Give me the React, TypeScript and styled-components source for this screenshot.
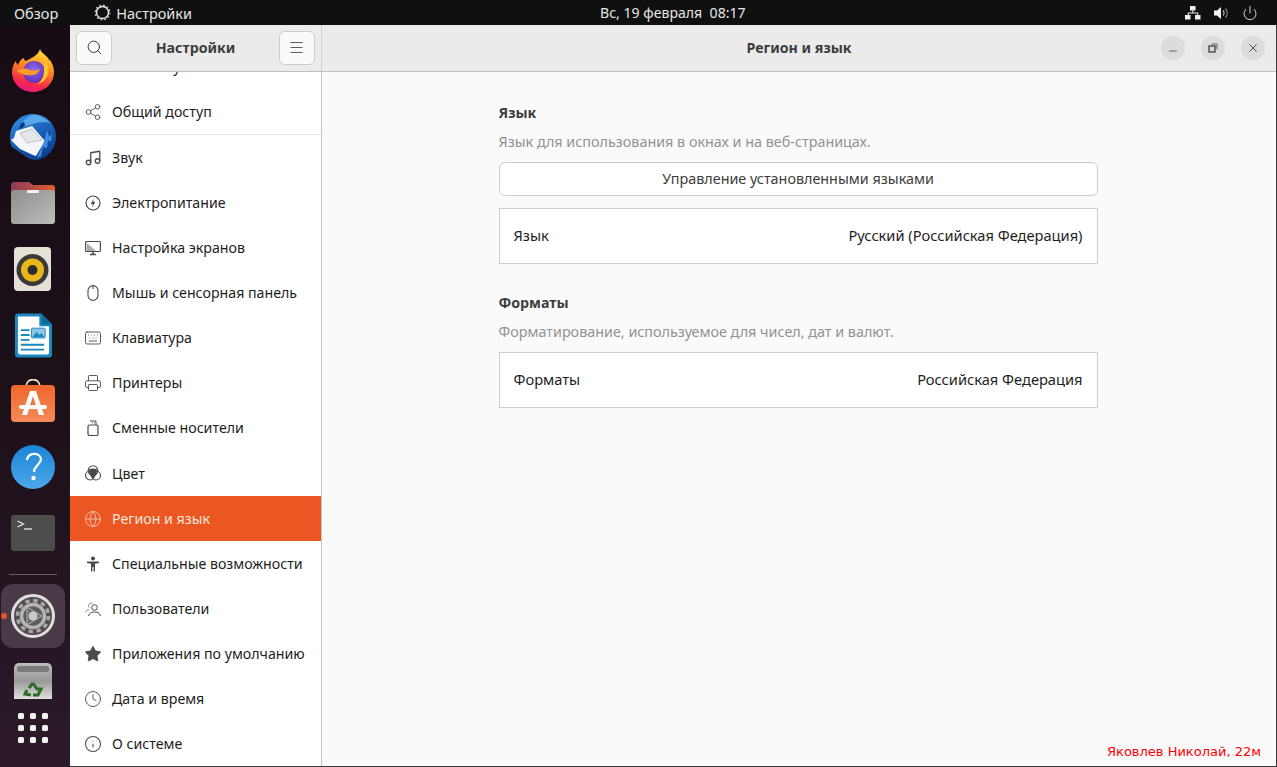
import React from "react";
import styled, { createGlobalStyle } from "styled-components";
import { Share2, Music, Keyboard, Printer, Globe, Clock, Info, Star, Search, Menu, Minus, X, Power } from "lucide-react";

const GlobalStyle = createGlobalStyle`
  html, body { margin: 0; padding: 0; height: 100%; overflow: hidden; }
  body { font-family: "Noto Sans", "Open Sans", sans-serif; font-size: 14px; }
  * { box-sizing: border-box; }
`;

const Screen = styled.div`
  width: 1277px;
  height: 767px;
  display: flex;
  flex-direction: column;
  position: relative;
  overflow: hidden;
`;

const TopBar = styled.div`
  height: 25px;
  flex: none;
  background: #101010;
  color: #e6e6e6;
  display: grid;
  grid-template-columns: 586px auto 1fr;
  align-items: center;
  padding: 0 19px 0 14px;
  font-size: 14.5px;
`;

const TopLeft = styled.div`
  display: flex;
  align-items: center;
`;

const AppName = styled.div`
  display: flex;
  align-items: center;
  gap: 5px;
  margin-left: 36px;
`;

const TopClock = styled.div`
  white-space: pre;
  font-size: 14.1px;
`;

const TopRight = styled.div`
  display: flex;
  align-items: center;
  justify-content: flex-end;
  gap: 13px;
`;

const Body = styled.div`
  flex: 1;
  display: flex;
  min-height: 0;
`;

const Dock = styled.nav`
  width: 70px;
  flex: none;
  background: linear-gradient(180deg, #170c14 0%, #1c1019 50%, #2c1a29 100%);
  display: flex;
  flex-direction: column;
  align-items: center;
  padding: 13px 4px 0 0;
  overflow: hidden;
`;

const DockSlot = styled.div`
  width: 66px;
  height: 66px;
  flex: none;
  display: flex;
  align-items: center;
  justify-content: center;
`;

const ActiveSlot = styled(DockSlot)`
  width: 64px;
  height: 64px;
  background: #4a3a47;
  border-radius: 12px;
  position: relative;
`;

const RunDot = styled.span`
  position: absolute;
  left: 0;
  top: 29px;
  width: 6px;
  height: 6px;
  border-radius: 50%;
  background: #e95420;
`;

const DockSeparator = styled.div`
  width: 48px;
  height: 1px;
  flex: none;
  margin: 8px 0 9px;
  background: #6b5a67;
`;

const AppGrid = styled.div`
  flex: none;
  display: grid;
  grid-template-columns: repeat(3, 6px);
  gap: 6px;
  margin-top: -1px;
  span {
    width: 6px;
    height: 6px;
    border-radius: 1.5px;
    background: #f2f2f2;
  }
`;

const Window = styled.div`
  flex: 1;
  display: flex;
  flex-direction: column;
  min-width: 0;
  border-right: 1px solid #3a3a3a;
  border-bottom: 1px solid #3a3a3a;
`;

const HeaderBar = styled.header`
  height: 47px;
  flex: none;
  display: flex;
  background: #ebebeb;
  border-bottom: 1px solid #bfbfbf;
`;

const SideHeader = styled.div`
  width: 252px;
  flex: none;
  display: flex;
  align-items: center;
  justify-content: space-between;
  padding: 0 6px 1px;
  border-right: 1px solid #d0d0d0;
`;

const HeaderButton = styled.button`
  width: 36px;
  height: 34px;
  padding: 0;
  display: flex;
  align-items: center;
  justify-content: center;
  background: #fafafa;
  border: 1px solid #cdcdcd;
  border-radius: 6px;
  color: #3d3d3d;
`;

const HeaderTitle = styled.div`
  font-weight: 700;
  font-size: 14.2px;
  color: #3d3d3d;
`;

const MainHeader = styled.div`
  flex: 1;
  display: flex;
  align-items: center;
  position: relative;
  justify-content: center;
  padding-bottom: 1px;
`;

const WindowButtons = styled.div`
  position: absolute;
  right: 11px;
  top: 11px;
  display: flex;
  gap: 16px;
`;

const RoundButton = styled.div`
  width: 24px;
  height: 24px;
  border-radius: 50%;
  background: #dcdcdc;
  color: #3d3d3d;
  display: flex;
  align-items: center;
  justify-content: center;
`;

const MinimizeGlyph = styled(Minus)`
  margin-top: 5px;
`;

const Columns = styled.div`
  flex: 1;
  display: flex;
  min-height: 0;
`;

const Sidebar = styled.aside`
  width: 252px;
  flex: none;
  background: #ffffff;
  border-right: 1px solid #c4c4c4;
  overflow: hidden;
`;

const SideList = styled.ul`
  list-style: none;
  margin: -28px 0 0;
  padding: 0;
`;

const SideRow = styled.li<{ $active?: boolean; $divided?: boolean; $tall?: boolean }>`
  height: ${({ $divided, $tall }) => ($divided || $tall ? 46 : 45)}px;
  display: flex;
  align-items: center;
  gap: 11px;
  padding-left: 15px;
  font-size: 14.2px;
  white-space: nowrap;
  color: ${({ $active }) => ($active ? "#fbe4da" : "#1e1e1e")};
  background: ${({ $active }) => ($active ? "#eb5723" : "transparent")};
  border-bottom: ${({ $divided }) => ($divided ? "1px solid #e6e6e6" : "none")};
`;

const SideIcon = styled.span<{ $active?: boolean }>`
  width: 16px;
  height: 16px;
  flex: none;
  display: flex;
  align-items: center;
  justify-content: center;
  color: ${({ $active }) => ($active ? "#f7c4ae" : "#4a4a4a")};
  svg {
    flex: none;
  }
`;

const Content = styled.main`
  flex: 1;
  background: #fafafa;
  display: flex;
  justify-content: center;
  padding: 31px 2px 0 0;
  position: relative;
`;

const Column = styled.div`
  width: 599px;
  display: flex;
  flex-direction: column;
`;

const SectionTitle = styled.h3`
  margin: 0;
  font-size: 14.2px;
  line-height: 20px;
  font-weight: 700;
  color: #3d3d3d;
`;

const SectionHint = styled.p`
  margin: 9px 0 10px;
  font-size: 14.35px;
  line-height: 20px;
  white-space: nowrap;
  color: #929292;
`;

const WideButton = styled.button`
  height: 34px;
  margin-bottom: 12px;
  padding: 0 0 2px;
  font: inherit;
  font-size: 14.35px;
  color: #3d3d3d;
  background: #ffffff;
  border: 1px solid #cdcdcd;
  border-radius: 6px;
`;

const SettingRow = styled.div`
  height: 56px;
  display: flex;
  align-items: center;
  justify-content: space-between;
  padding: 0 14px 2px;
  font-size: 14.65px;
  color: #1e1e1e;
  background: #ffffff;
  border: 1px solid #cdcdcd;
`;

const SectionGap = styled.div`
  height: 29px;
`;

const Watermark = styled.div`
  position: absolute;
  right: 15px;
  bottom: 7px;
  font-family: "DejaVu Sans", sans-serif;
  font-size: 13px;
  color: #ff0000;
`;

const lucide = { size: 18, strokeWidth: 1.2 };

function GearOutline() {
  return (
    <svg width="17" height="17" viewBox="0 0 17 17" fill="none">
      <circle cx="8.5" cy="8.5" r="6" stroke="#e6e6e6" strokeWidth="1.5" />
      <circle cx="8.5" cy="8.5" r="7.4" stroke="#cfcfcf" strokeWidth="1.1" strokeDasharray="2 1.9" />
    </svg>
  );
}

function NetworkIcon() {
  return (
    <svg width="16" height="14" viewBox="0 0 16 14" fill="#f0f0f0">
      <rect x="5" y="0" width="5.5" height="4.5" />
      <rect x="0" y="9" width="5.5" height="4.5" />
      <rect x="10" y="9" width="5.5" height="4.5" />
      <path d="M7.2 4.5h1v2h5v2.5h-1V7.5h-8.500v1.500h-1V6.500h4.500z" />
    </svg>
  );
}

function SoundIcon() {
  return (
    <svg width="15" height="14" viewBox="0 0 15 14">
      <path d="M0 4.500h3l4-3.500v12l-4-3.500H0z" fill="#f0f0f0" />
      <path d="M9 4.500a3.500 3.500 0 0 1 0 5" fill="none" stroke="#bbbbbb" strokeWidth="1.200" />
      <path d="M11.500 2.500a7 7 0 0 1 0 9" fill="none" stroke="#888888" strokeWidth="1.200" />
    </svg>
  );
}

function DisplayIcon() {
  return (
    <svg width="16" height="16" viewBox="0 0 16 16" fill="none" stroke="currentColor" strokeWidth="1.200">
      <rect x="0.600" y="1.500" width="14.800" height="10" rx="1" />
      <path d="M2 3l9 8H2z" fill="currentColor" opacity="0.450" stroke="none" />
      <path d="M5 14.500h6M8 11.500V14" strokeWidth="1.600" />
    </svg>
  );
}

function BoltCircleIcon() {
  return (
    <svg width="16" height="16" viewBox="0 0 16 16" fill="none">
      <circle cx="8" cy="8" r="7" stroke="currentColor" strokeWidth="1.200" />
      <path d="M8.800 3.500L5.800 9h2l-.6 3.500 3-5.500h-2z" fill="currentColor" />
    </svg>
  );
}

function MouseIcon() {
  return (
    <svg width="16" height="16" viewBox="0 0 16 16" fill="none" stroke="currentColor" strokeWidth="1.100">
      <rect x="3" y="0.600" width="10" height="14.800" rx="5" />
      <path d="M8 1v3" />
    </svg>
  );
}

function UsbIcon() {
  return (
    <svg width="16" height="16" viewBox="0 0 16 16" fill="none" stroke="currentColor" strokeWidth="1.200">
      <rect x="3" y="5" width="10" height="10.500" rx="1.500" />
      <path d="M5 1h6v4M7 2.800h.9M9.400 2.800h.9" strokeWidth="1" />
    </svg>
  );
}

function ColorIcon() {
  return (
    <svg width="16" height="16" viewBox="0 0 16 16" fill="none" stroke="currentColor" strokeWidth="1.100">
      <circle cx="8" cy="5.500" r="4.800" />
      <circle cx="5" cy="10.500" r="4.500" />
      <circle cx="11" cy="10.500" r="4.500" />
      <path d="M4 4.500c2.500-1.500 5.500-1.500 8 0l-.5 5-3.500 4-3.500-4z" fill="currentColor" stroke="none" />
    </svg>
  );
}

function AccessIcon() {
  return (
    <svg width="16" height="16" viewBox="0 0 16 16" fill="currentColor">
      <circle cx="8" cy="2.500" r="2" />
      <path d="M2 5.500h12v1.500l-4 .8V15.500H8.600V11h-1.200v4.500H6V7.800L2 7z" />
    </svg>
  );
}

function UsersIcon() {
  return (
    <svg width="16" height="16" viewBox="0 0 16 16" fill="none" stroke="currentColor" strokeWidth="1">
      <circle cx="9.500" cy="6.500" r="2.800" />
      <path d="M3.500 15c.5-3 3-4 6-4s5.500 1 6 4" />
      <path d="M7.500 2.500a2.500 2.500 0 0 0-4 2c0 1 .5 1.800 1.200 2.300M.5 11.500c.5-2 2-3 3.500-3.200" opacity="0.600" />
    </svg>
  );
}

function Firefox() {
  return (
    <svg width="44" height="44" viewBox="0 0 44 44">
      <defs>
        <linearGradient id="ffa" x1="0.600" y1="0" x2="0.300" y2="1">
          <stop offset="0" stopColor="#ffde37" />
          <stop offset="0.400" stopColor="#ff8a1f" />
          <stop offset="0.800" stopColor="#f5264c" />
          <stop offset="1" stopColor="#e6178b" />
        </linearGradient>
        <radialGradient id="ffb" cx="0.500" cy="0.400" r="0.600">
          <stop offset="0" stopColor="#8a6df0" />
          <stop offset="1" stopColor="#6a2cb8" />
        </radialGradient>
      </defs>
      <path d="M29 0c1 4 5 5 8 9 1 1 1 3 2 2 2 3 4 7 4 12 0 11-9 20-21 20S1 34 1 23c0-5 2-9 4-11 0 2 1 3 2 4 1-3 3-6 6-7 0 2 1 3 2 3 5-3 12-5 14-12z" fill="url(#ffa)" />
      <circle cx="23" cy="23" r="11" fill="url(#ffb)" />
      <path d="M6 22c4-3 8-3 13-1 3 1 7 0 10-1-2 5-6 7-10 6-4 1-9-1-13-4z" fill="#ff9c28" />
      <path d="M34 11c3 4 4 9 3 14-2 6-6 9-10 10 4-4 6-8 6-13 0-4 0-7 1-11z" fill="#ffc52d" />
    </svg>
  );
}

function Thunderbird() {
  return (
    <svg width="48" height="48" viewBox="0 0 48 48">
      <defs>
        <linearGradient id="tba" x1="0.300" y1="0" x2="0.800" y2="1">
          <stop offset="0" stopColor="#2a8ae0" />
          <stop offset="0.600" stopColor="#1552a8" />
          <stop offset="1" stopColor="#0b3a8c" />
        </linearGradient>
      </defs>
      <path d="M24 1c13 0 23 10 23 23 0 12-9 22-20 23-3 0-6-1-8-2L3 34C1 31 1 27 1 24 1 11 11 1 24 1z" fill="url(#tba)" />
      <path d="M12 13c2-6 7-11 13-11 6 0 12 3 16 8-6-2-12-1-17 1-4 1-8 3-12 2z" fill="#5aa8ec" />
      <path d="M10 16l2-5 3-2 1 3-3 3z" fill="#0f2f6e" />
      <path d="M7 18l16-5 13 15-9 15-3-1-13-6-9-9 3-2z" fill="#f4f6fa" />
      <path d="M11 20l12-4 10 11-15 3z" fill="#e4e6ea" stroke="#a8acb4" strokeWidth="0.700" />
      <path d="M38 17l2 7 3-3-1 8-3-2-1 8-4-1-2 9-4 2 5-11 3-9z" fill="#3d8fe0" />
    </svg>
  );
}

function FilesIcon() {
  return (
    <svg width="44" height="42" viewBox="0 0 44 42">
      <defs>
        <linearGradient id="fia" x1="0" y1="0" x2="1" y2="0">
          <stop offset="0" stopColor="#8c3a5c" />
          <stop offset="1" stopColor="#e0602c" />
        </linearGradient>
        <linearGradient id="fib" x1="0" y1="0" x2="1" y2="1">
          <stop offset="0" stopColor="#8e8e8e" />
          <stop offset="1" stopColor="#bdbdbd" />
        </linearGradient>
      </defs>
      <path d="M3 0h15l4 3h19a3 3 0 0 1 3 3v10H0V3a3 3 0 0 1 3-3z" fill="url(#fia)" />
      <path d="M3 8h38a3 3 0 0 1 3 3v28a3 3 0 0 1-3 3H3a3 3 0 0 1-3-3V11a3 3 0 0 1 3-3z" fill="url(#fib)" />
      <rect x="16" y="8" width="12" height="3" rx="1" fill="#f2f2f2" />
    </svg>
  );
}

function Rhythmbox() {
  return (
    <svg width="38" height="44" viewBox="0 0 38 44">
      <rect width="37" height="44" rx="4" fill="#e6e1d6" />
      <circle cx="18.500" cy="23" r="16" fill="#3a3a3a" />
      <circle cx="18.500" cy="23" r="11.500" fill="#e9b71c" />
      <circle cx="18.500" cy="23" r="5" fill="#2c2c2c" />
    </svg>
  );
}

function WriterIcon() {
  return (
    <svg width="37" height="45" viewBox="0 0 38 45">
      <path d="M3 0h24l11 11v31a3 3 0 0 1-3 3H3a3 3 0 0 1-3-3V3a3 3 0 0 1 3-3z" fill="#1a87bf" />
      <path d="M3 3h22v10h10v27a2 2 0 0 1-2 2H5a2 2 0 0 1-2-2z" fill="#ffffff" />
      <path d="M27 0l11 11H27z" fill="#0f6a9a" />
      <path d="M6 16h9v2H6zM6 21h9v2H6zM6 26h9v2H6zM6 31h24v2H6zM6 36h24v2H6z" fill="#1a87bf" />
      <rect x="17" y="15" width="14" height="10" rx="1" fill="#8fc6e4" stroke="#1a87bf" />
      <path d="M18 24l4-5 3 3 2-2 3 4z" fill="#1a87bf" />
    </svg>
  );
}

function StoreIcon() {
  return (
    <svg width="44" height="44" viewBox="0 0 44 44">
      <defs>
        <linearGradient id="sta" x1="0" y1="0" x2="0" y2="1">
          <stop offset="0" stopColor="#f0672c" />
          <stop offset="1" stopColor="#f58a58" />
        </linearGradient>
      </defs>
      <path d="M15 8c0-10 14-10 14 0" fill="none" stroke="#f3d9b0" strokeWidth="1.800" />
      <rect x="0" y="6" width="44" height="37" rx="4" fill="url(#sta)" />
      <path d="M19 12h6l8 24h-5l-6-19-6 19h-5z" fill="#ffffff" />
      <rect x="8" y="26" width="28" height="4" rx="2" fill="#ffffff" />
    </svg>
  );
}

function HelpIcon() {
  return (
    <svg width="44" height="44" viewBox="0 0 44 44">
      <defs>
        <linearGradient id="hea" x1="0" y1="0" x2="0" y2="1">
          <stop offset="0" stopColor="#1c85d8" />
          <stop offset="1" stopColor="#4ba8ea" />
        </linearGradient>
      </defs>
      <circle cx="22" cy="22" r="22" fill="url(#hea)" />
      <path d="M16 15c1-8 13-8 14-1 0 6-7 6-7 13" fill="none" stroke="#ffffff" strokeWidth="2.200" />
      <circle cx="22.500" cy="33" r="2.200" fill="#ffffff" />
    </svg>
  );
}

function TerminalIcon() {
  return (
    <svg width="44" height="36" viewBox="0 0 44 36">
      <rect width="44" height="36" rx="3" fill="#4c4c4c" />
      <path d="M6.500 6l6 3-6 3" fill="none" stroke="#ececec" strokeWidth="1.300" />
      <path d="M13 14h8" stroke="#ececec" strokeWidth="1.300" />
    </svg>
  );
}

function SettingsDockIcon() {
  return (
    <svg width="44" height="44" viewBox="0 0 44 44">
      <circle cx="22" cy="22" r="20.500" fill="#544a50" stroke="#dedede" strokeWidth="3" />
      <circle cx="22" cy="22" r="15.500" fill="none" stroke="#a8a8a8" strokeWidth="3.500" strokeDasharray="4.400 3.700" />
      <circle cx="22" cy="22" r="11.500" fill="#5f5a5c" stroke="#b4b4b4" strokeWidth="3.500" />
      <path d="M16 13l15 9-15 9z" fill="#6a6a6a" stroke="#b4b4b4" strokeWidth="1" />
      <circle cx="22" cy="22" r="4.500" fill="#c9c9c9" />
    </svg>
  );
}

function TrashIcon() {
  return (
    <svg width="38" height="36" viewBox="0 0 38 36">
      <defs>
        <linearGradient id="tra" x1="0" y1="0" x2="0" y2="1">
          <stop offset="0" stopColor="#bdbdbd" />
          <stop offset="0.500" stopColor="#9a9a9a" />
          <stop offset="1" stopColor="#e0e0e0" />
        </linearGradient>
      </defs>
      <path d="M5 0h28a5 5 0 0 1 5 5v31H0V5a5 5 0 0 1 5-5z" fill="url(#tra)" />
      <rect x="3" y="3" width="32" height="6" rx="2" fill="#7a7a7a" />
      <path d="M19 20l4 6h4l-3 6h-5M13 27l-2 4 6 1M15 25l4-5" fill="none" stroke="#2f6b2a" strokeWidth="3" />
    </svg>
  );
}

type SideItem = { label: string; icon?: React.ReactNode; active?: boolean; divided?: boolean; tall?: boolean };

const sideItems: SideItem[] = [
  { label: "Сетевые учётные записи" },
  { label: "Общий доступ", icon: <Share2 {...lucide} />, divided: true },
  { label: "Звук", icon: <Music {...lucide} strokeWidth={1.7} /> },
  { label: "Электропитание", icon: <BoltCircleIcon /> },
  { label: "Настройка экранов", icon: <DisplayIcon /> },
  { label: "Мышь и сенсорная панель", icon: <MouseIcon /> },
  { label: "Клавиатура", icon: <Keyboard {...lucide} /> },
  { label: "Принтеры", icon: <Printer {...lucide} /> },
  { label: "Сменные носители", icon: <UsbIcon /> },
  { label: "Цвет", icon: <ColorIcon />, tall: true },
  { label: "Регион и язык", icon: <Globe {...lucide} />, active: true },
  { label: "Специальные возможности", icon: <AccessIcon /> },
  { label: "Пользователи", icon: <UsersIcon /> },
  { label: "Приложения по умолчанию", icon: <Star {...lucide} fill="currentColor" /> },
  { label: "Дата и время", icon: <Clock {...lucide} /> },
  { label: "О системе", icon: <Info {...lucide} strokeWidth={1.4} /> },
];

export default function App() {
  return (
    <>
      <GlobalStyle />
      <Screen>
        <TopBar>
          <TopLeft>
            <span>Обзор</span>
            <AppName>
              <GearOutline />
              Настройки
            </AppName>
          </TopLeft>
          <TopClock>Вс, 19 февраля  08:17</TopClock>
          <TopRight>
            <NetworkIcon />
            <SoundIcon />
            <Power size={16} strokeWidth={1.3} color="#f0f0f0" />
          </TopRight>
        </TopBar>
        <Body>
          <Dock>
            <DockSlot><Firefox /></DockSlot>
            <DockSlot><Thunderbird /></DockSlot>
            <DockSlot><FilesIcon /></DockSlot>
            <DockSlot><Rhythmbox /></DockSlot>
            <DockSlot><WriterIcon /></DockSlot>
            <DockSlot><StoreIcon /></DockSlot>
            <DockSlot><HelpIcon /></DockSlot>
            <DockSlot><TerminalIcon /></DockSlot>
            <DockSeparator />
            <ActiveSlot>
              <RunDot />
              <SettingsDockIcon />
            </ActiveSlot>
            <DockSlot><TrashIcon /></DockSlot>
            <AppGrid>
              {Array.from({ length: 9 }, (_, i) => <span key={i} />)}
            </AppGrid>
          </Dock>
          <Window>
            <HeaderBar>
              <SideHeader>
                <HeaderButton><Search size={17} strokeWidth={1.4} /></HeaderButton>
                <HeaderTitle>Настройки</HeaderTitle>
                <HeaderButton><Menu size={17} strokeWidth={1.2} /></HeaderButton>
              </SideHeader>
              <MainHeader>
                <HeaderTitle>Регион и язык</HeaderTitle>
                <WindowButtons>
                  <RoundButton><MinimizeGlyph size={12} strokeWidth={1.5} /></RoundButton>
                  <RoundButton>
                    <svg width="10" height="10" viewBox="0 0 10 10" fill="none" stroke="currentColor">
                      <rect x="1" y="3" width="6" height="6" strokeWidth="1.300" />
                      <path d="M3.500 1h5.500v5.500" strokeWidth="0.800" />
                    </svg>
                  </RoundButton>
                  <RoundButton><X size={14} strokeWidth={1.5} /></RoundButton>
                </WindowButtons>
              </MainHeader>
            </HeaderBar>
            <Columns>
              <Sidebar>
                <SideList>
                  {sideItems.map((item) => (
                    <SideRow key={item.label} $active={item.active} $divided={item.divided} $tall={item.tall}>
                      <SideIcon $active={item.active}>{item.icon}</SideIcon>
                      {item.label}
                    </SideRow>
                  ))}
                </SideList>
              </Sidebar>
              <Content>
                <Column>
                  <SectionTitle>Язык</SectionTitle>
                  <SectionHint>Язык для использования в окнах и на веб-страницах.</SectionHint>
                  <WideButton>Управление установленными языками</WideButton>
                  <SettingRow>
                    <span>Язык</span>
                    <span>Русский (Российская Федерация)</span>
                  </SettingRow>
                  <SectionGap />
                  <SectionTitle>Форматы</SectionTitle>
                  <SectionHint>Форматирование, используемое для чисел, дат и валют.</SectionHint>
                  <SettingRow>
                    <span>Форматы</span>
                    <span>Российская Федерация</span>
                  </SettingRow>
                </Column>
                <Watermark>Яковлев Николай, 22м</Watermark>
              </Content>
            </Columns>
          </Window>
        </Body>
      </Screen>
    </>
  );
}
